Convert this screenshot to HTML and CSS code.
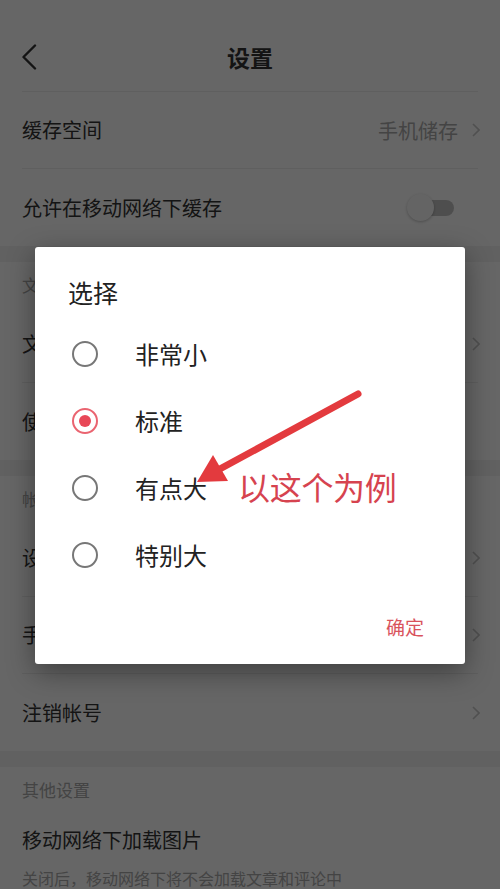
FILE: index.html
```html
<!DOCTYPE html>
<html lang="zh-CN">
<head>
<meta charset="utf-8">
<title>设置</title>
<link rel="stylesheet" href="styles.css">
</head>
<body>
<div class="page">
  <header class="topbar">
    <svg class="back" width="16" height="26" viewBox="0 0 16 26"><path d="M14 1.5 L2.5 13 L14 24.5" fill="none" stroke="#333" stroke-width="2.4" stroke-linecap="round" stroke-linejoin="round"/></svg>
    <h1 class="title">设置</h1>
    <span></span>
  </header>

  <section class="group">
    <div class="row"><span class="label">缓存空间</span><span class="value">手机储存</span><svg class="chev" width="8" height="14" viewBox="0 0 8 14"><path d="M1 1 L7 7 L1 13" fill="none" stroke="#c8c8c8" stroke-width="1.6"/></svg></div>
    <div class="row"><span class="label">允许在移动网络下缓存</span><span class="switch"><span class="knob"></span></span></div>
  </section>
  <div class="gap"></div>
  <div class="group-title">文章阅读</div>
  <section class="group">
    <div class="row"><span class="label">文字大小</span><span class="value">标准</span><svg class="chev" width="8" height="14" viewBox="0 0 8 14"><path d="M1 1 L7 7 L1 13" fill="none" stroke="#c8c8c8" stroke-width="1.6"/></svg></div>
    <div class="row"><span class="label">使用音量键翻页</span><span class="switch"><span class="knob"></span></span></div>
  </section>
  <div class="gap"></div>
  <div class="group-title">帐号与安全</div>
  <section class="group">
    <div class="row"><span class="label">设置密码</span><span class="value"></span><svg class="chev" width="8" height="14" viewBox="0 0 8 14"><path d="M1 1 L7 7 L1 13" fill="none" stroke="#c8c8c8" stroke-width="1.6"/></svg></div>
    <div class="row"><span class="label">手机号</span><span class="value"></span><svg class="chev" width="8" height="14" viewBox="0 0 8 14"><path d="M1 1 L7 7 L1 13" fill="none" stroke="#c8c8c8" stroke-width="1.6"/></svg></div>
    <div class="row"><span class="label">注销帐号</span><span class="value"></span><svg class="chev" width="8" height="14" viewBox="0 0 8 14"><path d="M1 1 L7 7 L1 13" fill="none" stroke="#c8c8c8" stroke-width="1.6"/></svg></div>
  </section>
  <div class="gap"></div>
  <div class="group-title">其他设置</div>
  <section class="group">
    <div class="row-tall">
      <div class="label">移动网络下加载图片</div>
      <div class="desc">关闭后，移动网络下将不会加载文章和评论中的图片</div>
    </div>
  </section>
</div>

<div class="mask"></div>

<div class="dialog">
  <div class="dialog-title">选择</div>
  <ul class="options">
    <li class="option"><span class="radio"></span><span class="opt-text">非常小</span></li>
    <li class="option checked"><span class="radio"></span><span class="opt-text">标准</span></li>
    <li class="option"><span class="radio"></span><span class="opt-text">有点大</span></li>
    <li class="option"><span class="radio"></span><span class="opt-text">特别大</span></li>
  </ul>
  <div class="dialog-footer"><span class="ok">确定</span></div>
</div>

<svg class="annot-arrow" width="500" height="889" viewBox="0 0 500 889">
  <line x1="358" y1="394" x2="218" y2="470" stroke="#e33a3e" stroke-width="7" stroke-linecap="round"/>
  <polygon points="197,482 213,455 228,481" fill="#e33a3e"/>
</svg>
<div class="annot-text">以这个为例</div>
</body>
</html>
```

FILE: styles.css
```css
* { box-sizing: border-box; }
html, body { margin: 0; padding: 0; }
body {
  width: 500px;
  height: 889px;
  overflow: hidden;
  position: relative;
  background: #fff;
  font-family: "Noto Sans CJK SC", "Noto Sans", "Liberation Sans", sans-serif;
  color: #333;
}
.page { width: 500px; }

.topbar {
  height: 92px;
  margin: 0 22px;
  border-bottom: 1px solid #eee;
  display: grid;
  grid-template-columns: 1fr auto 1fr;
  align-items: center;
  padding-top: 22px;
}
.back { display: block; margin-left: -1px; }
.title {
  margin: 0;
  font-size: 23px;
  font-weight: 700;
  color: #333;
  line-height: 30px;
}

.group { padding: 0 22px; }
.row {
  height: 77px;
  border-bottom: 1px solid #eee;
  display: flex;
  align-items: center;
}
.row:last-child { border-bottom: none; }
.label { font-size: 20px; color: #333; line-height: 28px; flex: 1; }
.value { font-size: 20px; color: #aaa; margin-right: 14px; }
.chev { display: block; margin-right: -2px; }

.switch {
  position: relative;
  width: 44px;
  height: 16px;
  border-radius: 8px;
  background: #c4c4c4;
  margin-right: 24px;
}
.knob {
  position: absolute;
  left: -3px;
  top: -6px;
  width: 27px;
  height: 27px;
  border-radius: 50%;
  background: #fafafa;
  box-shadow: 0 1px 3px rgba(0,0,0,0.25);
}

.gap { height: 16px; background: #f2f2f2; }
.group-title {
  height: 44px;
  padding: 0 22px;
  display: flex;
  align-items: center;
  font-size: 17px;
  color: #aaa;
}
.row-tall { padding-top: 15px; }
.row-tall .desc {
  margin-top: 13px;
  max-width: 330px;
  font-size: 16px;
  color: #aaa;
  line-height: 22px;
}

.mask {
  position: absolute;
  inset: 0;
  background: rgba(0,0,0,0.6);
}

.dialog {
  position: absolute;
  left: 35px;
  top: 247px;
  width: 430px;
  background: #fff;
  border-radius: 3px;
  box-shadow: 0 8px 28px rgba(0,0,0,0.4);
  padding-bottom: 24px;
}
.dialog-title {
  padding: 27px 0 0 33px;
  font-size: 25px;
  line-height: 36px;
  color: #222;
}
.options { list-style: none; margin: 10px 0 0; padding: 0; }
.option {
  height: 67px;
  display: flex;
  align-items: center;
  padding-left: 37px;
}
.radio {
  width: 26px;
  height: 26px;
  border-radius: 50%;
  border: 2.5px solid #777;
  display: flex;
  align-items: center;
  justify-content: center;
  flex: none;
}
.option.checked .radio { border-color: #ea6470; }
.option.checked .radio::after {
  content: "";
  width: 12px;
  height: 12px;
  border-radius: 50%;
  background: #e84757;
}
.opt-text {
  margin-left: 37px;
  font-size: 24px;
  color: #222;
  line-height: 32px;
}
.dialog-footer {
  margin-top: 26px;
  display: flex;
  justify-content: flex-end;
  padding-right: 41px;
}
.ok { font-size: 19px; line-height: 26px; color: #d9535d; }

.annot-arrow { position: absolute; left: 0; top: 0; pointer-events: none; }
.annot-text {
  position: absolute;
  left: 238px;
  top: 466px;
  font-size: 32px;
  line-height: 40px;
  color: #d6434f;
  letter-spacing: -0.3px;
}
```
